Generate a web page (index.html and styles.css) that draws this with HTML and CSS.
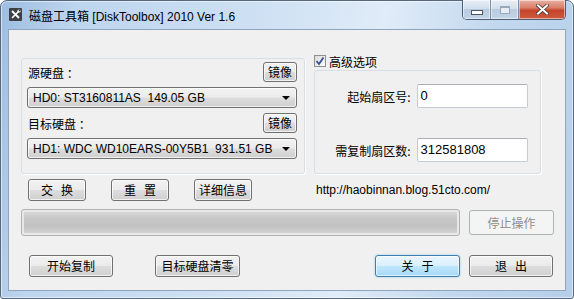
FILE: index.html
```html
<!DOCTYPE html>
<html lang="zh-CN">

<head>
    <meta charset="UTF-8">
    <title>磁盘工具箱 [DiskToolbox] 2010 Ver 1.6</title>
    <link rel="stylesheet" href="styles.css">
</head>

<body>
    <div class="window">
        <div class="titlebar">
            <svg class="app-icon" width="13" height="13" viewBox="0 0 13 13">
                <rect x="0" y="0" width="13" height="13" rx="1" fill="#3d4045"/>
                <path d="M3 3 L10 10" stroke="#fff" stroke-width="2"/>
                <path d="M10 3 L3 10" stroke="#fff" stroke-width="1.6"/>
                <circle cx="10" cy="3" r="1.6" fill="#fff"/>
                <circle cx="10.4" cy="2.6" r="0.8" fill="#3d4045"/>
            </svg>
            <span class="title">磁盘工具箱 [DiskToolbox] 2010 Ver 1.6</span>
            <div class="caption-buttons">
                <div class="cap cap-min"><span class="min-glyph"></span></div>
                <div class="cap cap-max"><span class="max-glyph"></span></div>
                <div class="cap cap-close">
                    <svg width="13" height="11" viewBox="0 0 13 11">
                        <path d="M2 1.5 L11 9.5 M11 1.5 L2 9.5" stroke="#4a3a36" stroke-width="3.6" stroke-linecap="square"/>
                        <path d="M2 1.5 L11 9.5 M11 1.5 L2 9.5" stroke="#fff" stroke-width="2" stroke-linecap="square"/>
                    </svg>
                </div>
            </div>
        </div>

        <div class="client">
            <div class="top-row">
                <div class="group disks">
                    <div class="disk-head">
                        <span class="zh">源硬盘 ：</span>
                        <button class="btn btn-mirror zh">镜像</button>
                    </div>
                    <div class="combo"><span>HD0: ST3160811AS&nbsp; 149.05 GB</span><i class="arrow"></i></div>
                    <div class="disk-head second">
                        <span class="zh">目标硬盘 ：</span>
                        <button class="btn btn-mirror zh">镜像</button>
                    </div>
                    <div class="combo"><span>HD1: WDC WD10EARS-00Y5B1&nbsp; 931.51 GB</span><i class="arrow"></i></div>
                </div>

                <div class="advanced">
                    <div class="check">
                        <span class="box">
                            <svg width="10" height="10" viewBox="0 0 10 10">
                                <path d="M1.5 5 L4 8 L8.5 1.5" fill="none" stroke="#3a4f8f" stroke-width="1.8"/>
                            </svg>
                        </span>
                        <span class="zh">高级选项</span>
                    </div>
                    <div class="group sectors">
                        <div class="field">
                            <span class="zh field-label">起始扇区号:</span>
                            <div class="input">0</div>
                        </div>
                        <div class="field">
                            <span class="zh field-label">需复制扇区数:</span>
                            <div class="input">312581808</div>
                        </div>
                    </div>
                </div>
            </div>

            <div class="action-row">
                <button class="btn btn-small zh">交<span class="gap"></span>换</button>
                <button class="btn btn-small zh">重<span class="gap"></span>置</button>
                <button class="btn btn-small zh">详细信息</button>
                <span class="url">http://haobinnan.blog.51cto.com/</span>
            </div>

            <div class="progress-row">
                <div class="progress"><div class="progress-fill"></div></div>
                <button class="btn btn-wide btn-disabled zh">停止操作</button>
            </div>

            <div class="bottom-row">
                <button class="btn btn-wide zh">开始复制</button>
                <button class="btn btn-wide zh">目标硬盘清零</button>
                <button class="btn btn-wide btn-default zh">关<span class="gap"></span>于</button>
                <button class="btn btn-wide zh">退<span class="gap"></span>出</button>
            </div>
        </div>
    </div>
</body>

</html>
```

FILE: styles.css
```css
body {
    margin: 0;
    background: #ffffff;
    font-family: "Liberation Sans", "Noto Sans CJK SC", sans-serif;
    font-size: 13px;
    color: #000;
}

.zh {
    font-family: "Noto Sans CJK SC", sans-serif;
    font-size: 12px;
}

.gap {
    display: inline-block;
    width: 8px;
}

.window {
    width: 574px;
    height: 299px;
    box-sizing: border-box;
    border: 1px solid #56687e;
    border-radius: 7px 7px 3px 3px;
    padding: 0 7px 7px 7px;
    display: flex;
    flex-direction: column;
    background: linear-gradient(100deg, #9dbde1 0%, #bdd5ee 12%, #d0e2f4 45%, #e0ecf8 62%, #c2d8ee 80%, #b5cee9 100%);
    box-shadow: inset 0 0 0 1px rgba(255, 255, 255, 0.55);
}

/* title bar */

.titlebar {
    height: 28px;
    display: flex;
    align-items: flex-start;
}

.app-icon {
    margin-top: 7px;
    margin-left: 1px;
}

.title {
    margin-left: 7px;
    margin-top: 6px;
    font-size: 12px;
    color: #000;
}

.caption-buttons {
    margin-left: auto;
    display: flex;
    height: 19px;
    margin-top: -1px;
    border: 1px solid #4e5e72;
    border-top: none;
    border-radius: 0 0 5px 5px;
    overflow: hidden;
}

.cap {
    display: flex;
    align-items: center;
    justify-content: center;
    box-shadow: inset 0 0 0 1px rgba(255, 255, 255, 0.5);
}

.cap-min,
.cap-max {
    width: 27px;
    background: linear-gradient(#e8eef6 0%, #d3dfec 45%, #b9cbe0 50%, #c2d4e8 100%);
    border-right: 1px solid #7d8ea3;
}

.min-glyph {
    width: 10px;
    height: 3px;
    margin-top: 5px;
    background: #fff;
    border: 1px solid #4a5566;
}

.max-glyph {
    width: 8px;
    height: 6px;
    border: 1px solid #9aa8b8;
    box-shadow: inset 0 1px 0 #9aa8b8;
    background: #e6edf5;
}

.cap-close {
    width: 46px;
    background: linear-gradient(#eab0a2 0%, #d9806a 40%, #c3432b 55%, #cf5b3f 100%);
}

/* client area */

.client {
    flex: 1;
    background: #f0f0f0;
    border: 1px solid #8fa4bd;
    padding: 24px 0 0 0;
    display: flex;
    flex-direction: column;
}

.top-row {
    display: flex;
    padding-left: 12px;
}

.group {
    box-sizing: border-box;
    border: 1px solid #d5dfe5;
    border-radius: 3px;
    box-shadow: 1px 1px 0 #fff;
}

.disks {
    width: 284px;
    height: 116px;
    margin-top: 4px;
    padding: 3px 7px 0 5px;
    display: flex;
    flex-direction: column;
}

.disk-head {
    display: flex;
    align-items: center;
    justify-content: space-between;
    padding-left: 1px;
    height: 20px;
}

.disk-head.second {
    margin-top: 5px;
}

.combo {
    margin-top: 5px;
    height: 21px;
    box-sizing: border-box;
    border: 1px solid #707070;
    border-radius: 3px;
    background: linear-gradient(#f2f2f2 0%, #ebebeb 48%, #dddddd 52%, #cfcfcf 100%);
    box-shadow: inset 0 0 0 1px rgba(255, 255, 255, 0.7);
    display: flex;
    align-items: center;
    justify-content: space-between;
    padding: 0 6px 0 5px;
    font-size: 12px;
    white-space: nowrap;
}

.arrow {
    width: 0;
    height: 0;
    border-left: 4px solid transparent;
    border-right: 4px solid transparent;
    border-top: 4px solid #000;
}

/* buttons */

.btn {
    box-sizing: border-box;
    height: 22px;
    padding: 0;
    border: 1px solid #707070;
    border-radius: 3px;
    background: linear-gradient(#f2f2f2 0%, #ebebeb 48%, #dddddd 52%, #cfcfcf 100%);
    box-shadow: inset 0 0 0 1px rgba(255, 255, 255, 0.7);
    color: #000;
    cursor: pointer;
    line-height: 18px;
    white-space: nowrap;
}

.btn-mirror {
    width: 34px;
    height: 20px;
    line-height: 16px;
}

.btn-small {
    width: 58px;
}

.btn-wide {
    width: 85px;
}

.btn-default {
    border-color: #3c7fb1;
    background: linear-gradient(#eaf6fd 0%, #d9f0fc 48%, #bee6fd 52%, #a7d9f5 100%);
    box-shadow: inset 0 0 0 1px rgba(255, 255, 255, 0.6), 0 0 2px #7ec2ea;
}

.btn-disabled {
    border-color: #adb2b5;
    background: #f4f4f4;
    box-shadow: none;
    color: #8d8d8d;
    height: 25px;
    margin-top: 1px;
}

/* advanced panel */

.advanced {
    width: 227px;
    margin-left: 9px;
    display: flex;
    flex-direction: column;
}

.check {
    display: flex;
    align-items: center;
    height: 14px;
    gap: 3px;
}

.box {
    box-sizing: border-box;
    width: 12px;
    height: 12px;
    border: 1px solid #8e8f8f;
    background: linear-gradient(135deg, #dcdcdc, #fbfbfb);
    display: flex;
    align-items: center;
    justify-content: center;
}

.sectors {
    margin-top: 2px;
    height: 104px;
    padding: 13px 12px 0 0;
    display: flex;
    flex-direction: column;
    gap: 30px;
}

.field {
    display: flex;
    align-items: center;
    gap: 6px;
}

.field-label {
    width: 96px;
    text-align: right;
}

.input {
    box-sizing: border-box;
    width: 112px;
    height: 24px;
    border: 1px solid #c6cbd1;
    border-top-color: #abadb3;
    border-radius: 2px;
    background: #fff;
    padding-left: 3px;
    line-height: 22px;
}

/* lower rows */

.action-row {
    display: flex;
    align-items: center;
    margin-top: 5px;
    padding-left: 19px;
    gap: 25px;
}

.url {
    margin-left: 39px;
    font-size: 12px;
}

.progress-row {
    display: flex;
    margin-top: 8px;
    padding-left: 12px;
    gap: 9px;
}

.progress {
    box-sizing: border-box;
    width: 439px;
    height: 27px;
    border: 1px solid #b2b2b2;
    border-radius: 3px;
    background: #e8e8e8;
    padding: 2px;
}

.progress-fill {
    height: 100%;
    background: linear-gradient(#d6d6d6 0%, #c6c6c6 35%, #c3c3c3 70%, #d2d2d2 100%);
    border-radius: 1px;
}

.bottom-row {
    display: flex;
    margin-top: 19px;
    padding-left: 20px;
}

.bottom-row .btn:nth-child(1) {
    width: 84px;
}

.bottom-row .btn:nth-child(2) {
    margin-left: 42px;
}

.bottom-row .btn:nth-child(3) {
    margin-left: 135px;
}

.bottom-row .btn:nth-child(4) {
    margin-left: 9px;
    width: 84px;
}
```
